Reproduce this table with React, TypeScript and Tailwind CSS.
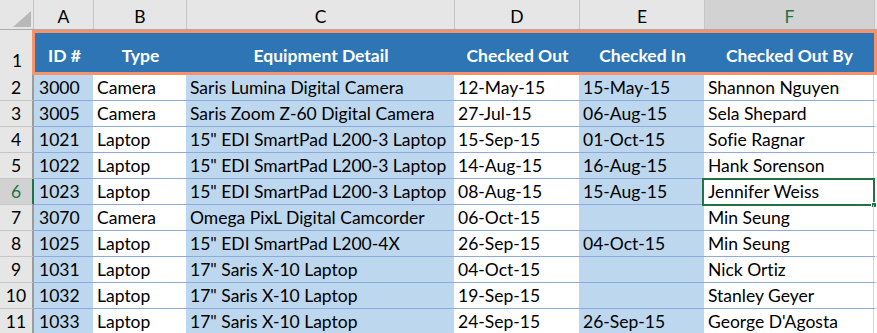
const rows = [
  { id: "3000", type: "Camera", detail: "Saris Lumina Digital Camera", out: "12-May-15", in: "15-May-15", by: "Shannon Nguyen" },
  { id: "3005", type: "Camera", detail: "Saris Zoom Z-60 Digital Camera", out: "27-Jul-15", in: "06-Aug-15", by: "Sela Shepard" },
  { id: "1021", type: "Laptop", detail: '15" EDI SmartPad L200-3 Laptop', out: "15-Sep-15", in: "01-Oct-15", by: "Sofie Ragnar" },
  { id: "1022", type: "Laptop", detail: '15" EDI SmartPad L200-3 Laptop', out: "14-Aug-15", in: "16-Aug-15", by: "Hank Sorenson" },
  { id: "1023", type: "Laptop", detail: '15" EDI SmartPad L200-3 Laptop', out: "08-Aug-15", in: "15-Aug-15", by: "Jennifer Weiss" },
  { id: "3070", type: "Camera", detail: "Omega PixL Digital Camcorder", out: "06-Oct-15", in: "", by: "Min Seung" },
  { id: "1025", type: "Laptop", detail: '15" EDI SmartPad L200-4X', out: "26-Sep-15", in: "04-Oct-15", by: "Min Seung" },
  { id: "1031", type: "Laptop", detail: '17" Saris X-10 Laptop', out: "04-Oct-15", in: "", by: "Nick Ortiz" },
  { id: "1032", type: "Laptop", detail: '17" Saris X-10 Laptop', out: "19-Sep-15", in: "", by: "Stanley Geyer" },
  { id: "1033", type: "Laptop", detail: '17" Saris X-10 Laptop', out: "24-Sep-15", in: "26-Sep-15", by: "George D'Agosta" },
];

const letters = [
  { l: "A", w: "w-[60px]" },
  { l: "B", w: "w-[93px]" },
  { l: "C", w: "w-[268px]" },
  { l: "D", w: "w-[125px]" },
  { l: "E", w: "w-[125px]" },
  { l: "F", w: "w-[170px]" },
];

const cellClass =
  "flex h-full shrink-0 items-end overflow-hidden whitespace-nowrap px-[4px] pb-[4px] leading-none";

function ColumnHeader() {
  return (
    <div className="flex h-[30px] border-b border-[#ababab] bg-[#e6e6e6]">
      <div className="flex w-[34px] shrink-0 items-end justify-end border-r border-[#c6c6c6] pb-[2px] pr-[2px]">
        <svg width="18" height="16" viewBox="0 0 18 16">
          <polygon points="18,0 18,16 0,16" fill="#b8b8b8" />
        </svg>
      </div>
      {letters.map((c) => (
        <div
          key={c.l}
          className={`${c.w} flex shrink-0 items-end justify-center border-r border-[#c6c6c6] pb-[4px] leading-none ${
            c.l === "F" ? "bg-[#d2d2d2] text-[#217346]" : ""
          }`}
        >
          {c.l}
        </div>
      ))}
      <div className="flex-1" />
    </div>
  );
}

function TitleRow() {
  return (
    <div className="flex h-[45px]">
      <div className="flex w-[32px] shrink-0 items-end justify-center bg-[#e6e6e6] pb-[6px] pl-[2px] leading-none">
        1
      </div>
      <div className="flex h-full w-[845px] shrink-0 border-[3px] border-[#f8926a] bg-[#2e75b6] font-bold text-white">
        {[
          { t: "ID #", w: "w-[59px]" },
          { t: "Type", w: "w-[93px]" },
          { t: "Equipment Detail", w: "w-[268px]" },
          { t: "Checked Out", w: "w-[125px]" },
          { t: "Checked In", w: "w-[125px]" },
          { t: "Checked Out By", w: "w-[169px]" },
        ].map((h) => (
          <div
            key={h.t}
            className={`${h.w} flex shrink-0 items-end justify-center whitespace-nowrap pb-[8px] leading-none`}
          >
            {h.t}
          </div>
        ))}
      </div>
    </div>
  );
}

export default function App() {
  return (
    <div className="h-[333px] w-[877px] overflow-hidden bg-white font-['Lato',sans-serif] text-[17.5px] text-black [font-variant-ligatures:none]">
      <ColumnHeader />
      <TitleRow />
      {rows.map((r, i) => {
        const n = i + 2;
        const active = n === 6;
        return (
          <div key={n} className="flex h-[26px]">
            <div
              className={`flex w-[34px] shrink-0 items-end justify-center border-b border-r-2 pb-[4px] leading-none ${
                active
                  ? "border-b-[#c6c6c6] border-r-[#217346] bg-[#d2d2d2] text-[#217346]"
                  : "border-b-[#c6c6c6] border-r-[#9b9b9b] bg-[#e6e6e6]"
              }`}
            >
              {n}
            </div>
            <div className="flex w-[841px] shrink-0 border-b border-[#8ea9db]">
              <div className={`${cellClass} w-[59px] bg-[#bdd7ee] pl-[5px]`}>{r.id}</div>
              <div className={`${cellClass} w-[93px]`}>{r.type}</div>
              <div className={`${cellClass} w-[268px] bg-[#bdd7ee]`}>{r.detail}</div>
              <div className={`${cellClass} w-[125px]`}>{r.out}</div>
              <div className={`${cellClass} w-[125px] bg-[#bdd7ee]`}>{r.in}</div>
              <div className={`${cellClass} relative w-[170px] overflow-visible border-r border-[#d4d4d4]`}>
                {r.by}
                {active && (
                  <div className="absolute -bottom-[2px] -left-[2px] -right-[2px] -top-[1px] border-2 border-[#217346]">
                    <div className="absolute -bottom-[4px] -right-[4px] h-[6px] w-[6px] border border-white bg-[#217346]" />
                  </div>
                )}
              </div>
            </div>
            <div className="flex-1 border-b border-[#e2e2e2]" />
          </div>
        );
      })}
    </div>
  );
}
